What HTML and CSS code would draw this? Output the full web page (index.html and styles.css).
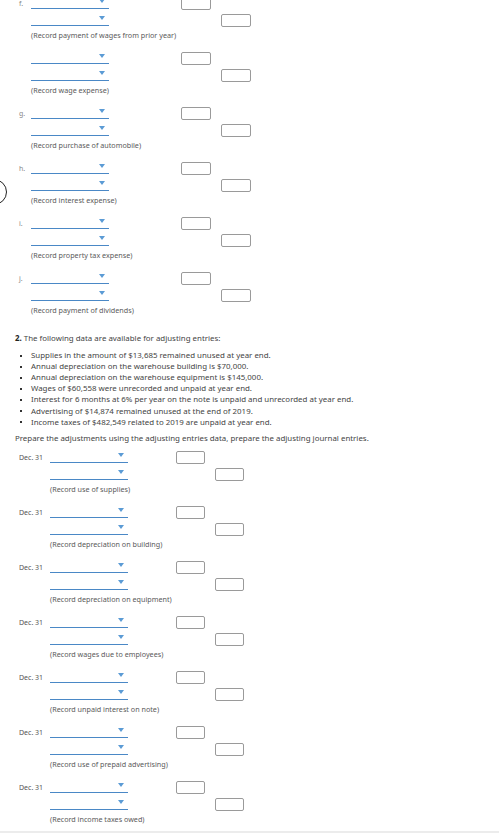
FILE: index.html
```html
<!DOCTYPE html>
<html lang="en">
<head>
    <meta charset="UTF-8">
    <meta name="viewport" content="width=device-width, initial-scale=1.0">
    <title>Adjusting Entries</title>
    <link rel="stylesheet" href="styles.css">
</head>
<body>
    <div class="ring"></div>

    <main class="sheet">
        <section class="journal part-one">
            <div class="entry">
                <div class="line"><span class="tag">f.</span><span class="pick"></span><span class="amt dr"></span></div>
                <div class="line"><span class="tag"></span><span class="pick"></span><span class="amt cr"></span></div>
                <p class="note">(Record payment of wages from prior year)</p>
            </div>
            <div class="entry">
                <div class="line"><span class="tag"></span><span class="pick"></span><span class="amt dr"></span></div>
                <div class="line"><span class="tag"></span><span class="pick"></span><span class="amt cr"></span></div>
                <p class="note">(Record wage expense)</p>
            </div>
            <div class="entry">
                <div class="line"><span class="tag">g.</span><span class="pick"></span><span class="amt dr"></span></div>
                <div class="line"><span class="tag"></span><span class="pick"></span><span class="amt cr"></span></div>
                <p class="note">(Record purchase of automobile)</p>
            </div>
            <div class="entry">
                <div class="line"><span class="tag">h.</span><span class="pick"></span><span class="amt dr"></span></div>
                <div class="line"><span class="tag"></span><span class="pick"></span><span class="amt cr"></span></div>
                <p class="note">(Record interest expense)</p>
            </div>
            <div class="entry">
                <div class="line"><span class="tag">i.</span><span class="pick"></span><span class="amt dr"></span></div>
                <div class="line"><span class="tag"></span><span class="pick"></span><span class="amt cr"></span></div>
                <p class="note">(Record property tax expense)</p>
            </div>
            <div class="entry">
                <div class="line"><span class="tag">j.</span><span class="pick"></span><span class="amt dr"></span></div>
                <div class="line"><span class="tag"></span><span class="pick"></span><span class="amt cr"></span></div>
                <p class="note">(Record payment of dividends)</p>
            </div>
        </section>

        <section class="data">
            <h2 class="question"><b>2.</b> The following data are available for adjusting entries:</h2>
            <ul class="facts">
                <li>Supplies in the amount of $13,685 remained unused at year end.</li>
                <li>Annual depreciation on the warehouse building is $70,000.</li>
                <li>Annual depreciation on the warehouse equipment is $145,000.</li>
                <li>Wages of $60,558 were unrecorded and unpaid at year end.</li>
                <li>Interest for 6 months at 6% per year on the note is unpaid and unrecorded at year end.</li>
                <li>Advertising of $14,874 remained unused at the end of 2019.</li>
                <li>Income taxes of $482,549 related to 2019 are unpaid at year end.</li>
            </ul>
            <p class="prompt">Prepare the adjustments using the adjusting entries data, prepare the adjusting journal entries.</p>
        </section>

        <section class="journal part-two">
            <div class="entry">
                <div class="line"><span class="tag">Dec. 31</span><span class="pick"></span><span class="amt dr"></span></div>
                <div class="line"><span class="tag"></span><span class="pick"></span><span class="amt cr"></span></div>
                <p class="note">(Record use of supplies)</p>
            </div>
            <div class="entry">
                <div class="line"><span class="tag">Dec. 31</span><span class="pick"></span><span class="amt dr"></span></div>
                <div class="line"><span class="tag"></span><span class="pick"></span><span class="amt cr"></span></div>
                <p class="note">(Record depreciation on building)</p>
            </div>
            <div class="entry">
                <div class="line"><span class="tag">Dec. 31</span><span class="pick"></span><span class="amt dr"></span></div>
                <div class="line"><span class="tag"></span><span class="pick"></span><span class="amt cr"></span></div>
                <p class="note">(Record depreciation on equipment)</p>
            </div>
            <div class="entry">
                <div class="line"><span class="tag">Dec. 31</span><span class="pick"></span><span class="amt dr"></span></div>
                <div class="line"><span class="tag"></span><span class="pick"></span><span class="amt cr"></span></div>
                <p class="note">(Record wages due to employees)</p>
            </div>
            <div class="entry">
                <div class="line"><span class="tag">Dec. 31</span><span class="pick"></span><span class="amt dr"></span></div>
                <div class="line"><span class="tag"></span><span class="pick"></span><span class="amt cr"></span></div>
                <p class="note">(Record unpaid interest on note)</p>
            </div>
            <div class="entry">
                <div class="line"><span class="tag">Dec. 31</span><span class="pick"></span><span class="amt dr"></span></div>
                <div class="line"><span class="tag"></span><span class="pick"></span><span class="amt cr"></span></div>
                <p class="note">(Record use of prepaid advertising)</p>
            </div>
            <div class="entry">
                <div class="line"><span class="tag">Dec. 31</span><span class="pick"></span><span class="amt dr"></span></div>
                <div class="line"><span class="tag"></span><span class="pick"></span><span class="amt cr"></span></div>
                <p class="note">(Record income taxes owed)</p>
            </div>
        </section>
    </main>

    <div class="edge"></div>
</body>
</html>
```

FILE: styles.css
```css
body {
    margin: 0;
    padding: 0;
    background-color: #fff;
    font-family: "Noto Sans", "DejaVu Sans", sans-serif;
    color: #444;
    overflow: hidden;
}
.sheet {
    margin-top: -4px;
    padding-left: 19px;
}
.entry {
    margin-bottom: 11px;
}
.line {
    display: flex;
    height: 17px;
}
.tag {
    font-size: 7px;
    line-height: 15px;
    color: #888;
}
.part-one .tag {
    width: 12px;
}
.part-two .tag {
    width: 31px;
    line-height: 16px;
    color: #555;
}
.pick {
    display: flex;
    justify-content: flex-end;
    box-sizing: border-box;
    width: 78px;
    height: 13px;
    padding: 3px 4px 0 0;
    border-bottom: 1px solid #4a88c6;
}
.pick::after {
    content: "";
    width: 0;
    height: 0;
    border-left: 3.5px solid transparent;
    border-right: 3.5px solid transparent;
    border-top: 4px solid #5b9bd5;
}
.amt {
    box-sizing: border-box;
    width: 30px;
    height: 13px;
    margin-top: 1px;
    border: 1px solid #9a9a9a;
    border-radius: 2px;
    background: #fff;
}
.part-one .dr {
    margin-left: 72px;
}
.part-one .cr {
    margin-left: 112px;
}
.part-two .amt {
    width: 29px;
}
.part-two .dr {
    margin-left: 48px;
}
.part-two .cr {
    margin-left: 87px;
}
.note {
    margin: 0;
    font-size: 7.2px;
    line-height: 10px;
    color: #5a5a5a;
}
.part-one .note {
    padding-left: 12px;
}
.part-two .note {
    padding-left: 31px;
}
/* sibling margins collapse, so this one has to cover the entry gap too */
.data {
    margin: 18px 0 0 -4px;
    font-size: 7.9px;
    line-height: 11px;
}
.question {
    margin: 0;
    font-size: 7.9px;
    font-weight: normal;
    line-height: 11px;
}
.question b {
    color: #222;
}
.facts {
    margin: 6px 0 0;
    padding: 0 0 0 5px;
    list-style: none;
}
.facts li {
    display: flex;
    align-items: center;
    height: 11.1px;
}
.facts li::before {
    content: "";
    flex: none;
    width: 2px;
    height: 2px;
    margin-right: 9px;
    background: #333;
}
.prompt {
    margin: 5px 0 6px;
}
.ring {
    position: absolute;
    left: -19px;
    top: 179px;
    width: 24px;
    height: 24px;
    border: 1.5px solid #222;
    border-radius: 50%;
}
.edge {
    position: fixed;
    left: 0;
    right: 0;
    bottom: 0;
    height: 2px;
    background: #ececec;
}
```
